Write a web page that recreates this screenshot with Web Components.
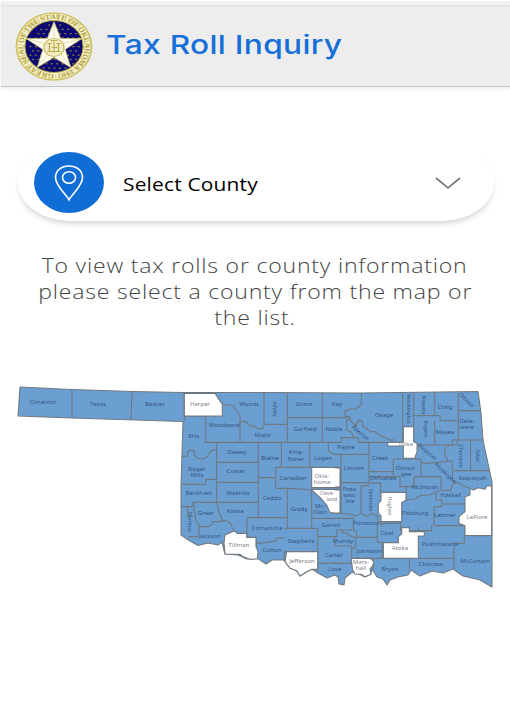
<!DOCTYPE html>
<html lang="en"><head><meta charset="utf-8"><title>Tax Roll Inquiry</title>
<style>body{margin:0;background:#fff;font-family:"Open Sans","Noto Sans",sans-serif;overflow:hidden}</style></head>
<body>
<tax-header>Tax Roll Inquiry</tax-header>
<county-select>Select County</county-select>
<intro-text><span>To view tax rolls or county information</span><span>please select a county from the map or</span><span>the list.</span></intro-text>
<county-map></county-map>
<script>
const define=(name,html,setup)=>customElements.define(name,class extends HTMLElement{
  constructor(){super();const r=this.attachShadow({mode:'open'});r.innerHTML=html;if(setup)setup(r);}
});

define('state-seal',`<style>:host{display:block;width:78px;height:69px}svg{display:block}text{font:bold 7px "Liberation Serif",serif;fill:#b3a542}</style>
<svg width="78" height="69" viewBox="0 0 78 69"><g transform="translate(39 34.5) scale(1.12 1)">
<circle r="33.5" fill="#fbf8e4" stroke="#cfc36b" stroke-width="1.6"/><circle r="30" fill="none" stroke="#e2d992" stroke-width="5" stroke-dasharray="1.5 1.3"/>
<path id="ring" d="M0 27.3A27.3 27.3 0 1 1 .1 27.3" fill="none"/><text textLength="168" lengthAdjust="spacingAndGlyphs"><textPath href="#ring">GREAT SEAL OF THE STATE OF OKLAHOMA 1907</textPath></text>
<circle r="26" fill="#0c0a72" stroke="#b9aa3d" stroke-width="1"/>
<g id="dots" fill="#8c813b"></g>
<path d="M0-25L6-8H25L10 3L15 21L0 11L-15 21L-10 3L-25-8H-6Z" fill="#fffdf0" stroke="#c9bb62" stroke-width=".7"/>
<path d="M0-24V0L24-8M0 0L15 20M0 0L-15 20M0 0L-24-8" stroke="#dbd191" fill="none" stroke-width=".7"/>
<circle r="9" cy="1" fill="#f3edc8" stroke="#cabd62" stroke-width="1.2"/><path d="M-6 5H6M-4 5V-3M0 6V-5M4 5V-3M-6-3H-2M2-3H6M-3-6H3M-2 1H3" stroke="#b9aa4a" stroke-width="1.1"/>
</g></svg>`,r=>{
  let s='';for(let y=-22;y<24;y+=4.3)for(let x=-22+(Math.round(y/4.3)&1)*2.4;x<23;x+=4.8)if(x*x+y*y<560)s+=`<rect x="${x}" y="${y}" width="1.8" height="1.2"/>`;
  r.querySelector('#dots').innerHTML=s;
});

define('tax-header',`<style>:host{display:flex;align-items:center;box-sizing:border-box;height:87px;padding:6px 0 0 14px;margin-left:1px;background:linear-gradient(#fff 0 1px,#eff3f2 1px 5px,#dfdfdf 5px 6px,#ededed 6px);border-bottom:1px solid #c4c4c4;box-shadow:0 2px 4px #0001;gap:13px}
h1{font:500 26.2px/40px "Inter",sans-serif;letter-spacing:.25px;color:#166fd8;margin:-2px 0 0;white-space:nowrap;transform-origin:0 50%;transform:scaleX(1.21)}</style>
<state-seal></state-seal><h1><slot></slot></h1>`);

define('county-select',`<style>:host{display:flex;align-items:center;box-sizing:border-box;margin:57px 16px 0 18px;height:77px;padding:0 32px 0 16px;border-radius:54px/40px;background:#fff;box-shadow:0 4px 6px -2px #0003}
.pin{width:70px;height:61px;border-radius:50%;background:#116dd6;display:grid;place-items:center}
.label{font-size:18.3px;line-height:28px;color:#000;margin-left:19px;margin-top:3px;flex:1;white-space:nowrap;letter-spacing:.15px}
.label span{display:inline-block;transform:scaleX(1.145);transform-origin:0 50%}svg{display:block}</style>
<div class="pin"><svg width="32" height="38" viewBox="0 0 32 38" fill="none" stroke="#fff" stroke-width="1.6"><path d="M16 36C13 30 2.500 22 2.500 13.500C2.500 6.400 8.500 2 16 2S29.500 6.400 29.500 13.500C29.500 22 19 30 16 36Z"/><ellipse cx="16" cy="13.500" rx="6.500" ry="5.800"/></svg></div>
<div class="label"><span><slot></slot></span></div><svg width="28" height="16" viewBox="0 0 28 16"><path d="M2 3L14 13L26 3" fill="none" stroke="#777" stroke-width="1.7"/></svg>`);

define('intro-text',`<style>:host{display:flex;flex-direction:column;align-items:center;margin-top:31px;margin-bottom:50px;color:#444;font-size:21px;font-weight:300;line-height:26px;letter-spacing:.7px;white-space:nowrap}
::slotted(span){display:block;transform:scaleX(1.1)}</style><slot></slot>`);

/* The state is drawn in page units; each half's county lines use a grid three times finer. */
define('county-map',`<style>:host{display:block;height:215px}svg{display:block}text{font:5.2px "Noto Sans",sans-serif;fill:#34557f;text-anchor:middle}text.open{fill:#85808c}</style>
<svg width="510" height="215" viewBox="0 380 510 215"><g id="land" stroke="#6f7982" stroke-width="1.1" stroke-linejoin="round"></g><g id="labels"></g></svg>`,r=>{
  const outline='M20 387L72 389.500L132 391.500L183 392.500H268L360 393L478 391.500L481 413L483 440L489 468L492 482V587L480 580L463 576L453 569L443 573L432 571L420 576L411 570L408 575L398 577L390 580L387 585L383 579L377 577L372 569L371 574L365 577L355 572L351 573L345 578L344 585L339 584L338 577L335 575L327 578L318 573L312 569L307 571.500L300 576L297 571L290 568L284 560L272 560L266 564L257 558L247 559L238 555L225 554L222 542L218 545L208 543L198 545.500L190 541L181 535L181 486L183 421.500L72 418L18 416Z';
  const west='M28 40V122M142 75H160L175 78L182 90L195 105V187M28 108H92V187M197 125H213L225 137L240 139L248 146H262L267 135V40M267 133H337M337 40V187M337 113H495M442 40V187M20 230L38 228V215L45 210L58 212V225L68 235L82 238L98 230L102 220L112 210H125M125 187V367M92 187H460M125 247H250M125 307H250M20 313H92V298H125M250 187V413M250 293H302M302 262V325M302 262H410M302 325H345L410 330M319 187V262M404 187V262M410 325V415M20 380H52V367H125M38 380V408H62V425L72 432V470H40M57 367V390L62 405M72 440H102L112 432V425H142M125 367L130 385L132 400L140 412V422H155L168 432L172 445L178 452M125 367H250V413M216 415V465M216 413H337M337 325V445M328 445H428V515H328V545M245 490L275 487L305 482V475L328 472M243 470V500M410 415H480M428 470H480M428 445V578M410 415V445M428 550H480M460 187V213L475 223H480';
  const east='M79 40V75L62 87H45L30 93V108L45 110V117L35 122V150L50 157L55 173M0 113H38M45 118L52 128L62 135L60 145L70 122H80L85 140L95 145L105 155H120L132 165L150 172L165 180H180M-20 187H20V173H70V187H205M102 187V308M0 223H102M18 223V400M102 275H175M175 237V290M20 308H102M203 40V187M236 40V190M299 40V107M236 107H315V122H370M370 40V180M299 122V197M370 92H438M352 180H445M407 180V272M367 180V195H250L240 185M357 272H465M352 180V195L335 197L327 212L332 228L338 242L352 245V300M175 237H258V248L275 250L352 243M258 250V290M237 290H318V330M237 290V320H195V290H105M102 310L137 308V340M213 320V360M318 330L300 338L282 345L258 346L240 357L213 360L197 370V452H290V437M303 335V360H320V372H390M297 437V380H320V372M297 437H390M388 467V490H357V568M318 330L345 332L355 310L372 308L385 318L405 325M303 360V345M352 300L365 310M78 317V402M78 317H102M0 400L45 402L60 408L80 400L95 410L110 400L128 408V425L140 430V440M55 410V450L65 455V472M0 415H52M52 450H22V458L35 460L52 470L62 472V500L50 507M0 470H5V450H22M0 498H50V550M62 472H127M127 430H193M127 430V487H142V535M48 535H357M-10 550H48M250 440V455M115 535V568M223 535V568M0 470V498';
  const openWest=['M28 40H120L142 73V108H28Z','M410 262H495V323H410Z','M150 465L178 453L187 460H215V472H243V500L249 515L247 537L225 538L205 530L195 523L150 522L147 490Z','M335 515H428V568L410 568L395 575L375 588L365 572L345 565L330 545Z','M410 328H495V400L465 398L455 375L435 352L410 330Z'];
  const openEast=['M205 140H236V185L246 190V215L240 232V235H205V198H158V187H205Z','M138 337H213V360L200 368V425H138V407L130 400V370L138 362Z','M200 443H223V455H268V468H250V535H145V488H190V470L200 462Z','M405 325L415 330L430 323L450 328L455 318H470V467H390V437L372 430V410L390 395V350L405 345Z','M48 535H105L117 545L112 560L105 565L108 583L90 590L78 583L60 582L53 570Z'];
  const half=(x,lines,open)=>`<g transform="translate(${x} 380) scale(.33333)" stroke-width="3.3"><path d="${lines}" fill="none"/>${open.map(d=>`<path d="${d}" fill="#fff"/>`).join('')}</g>`;
  r.querySelector('#land').innerHTML=`<path d="${outline}" fill="#6c9fd1"/><path d="M72 390V418M132 391L131 420" fill="none"/>`+half(175,west,openWest)+half(335,east,openEast)+'<path d="M334 468H340V487H334M334 490H340V513H334" fill="#fff"/><path d="M333 468.500H336V486.500H333ZM333 490.500H336V511.500H333Z" fill="#fff" stroke="none"/>';
  const labels=[['Cimarron',43,404],['Texas',98,406],['Beaver',155,406],['Harper',200,406],['Woods',249,406],['Alfalfa',273,409,90],['Grant',304,406],['Kay',337,406],['Osage',384,417],['Washington',407,409,90],['Nowata',422,405,90],['Craig',445,409],['Ottawa',465,401,48],['Rogers',424,429,90],['Mayes',445,434],['Dela-',467,423],['ware',467,429],['Ellis',194,438],['Woodward',224,427],['Major',263,437],['Garfield',305,431],['Noble',334,431],['Pawnee',359,434,45],['Tulsa',405.500,446],['Creek',380,460],['Wagoner',426,453,45],['Cherokee',459,456,90],['Adair',476,456,90],['Roger',197,471],['Mills',197,477],['Dewey',237,454],['Custer',236,473],['Blaine',270,460],['King-',296,454],['fisher',296,461],['Logan',323,460],['Payne',346,449],['Lincoln',354,470],['Okla-',322,478],['homa',322,484],['Canadian',293,480],['Okmul-',406,470],['gee',406,476],['Okfuskee',383,480],['McIntosh',425,489],['Muskogee',444,474,48],['Sequoyah',473,480],['Beckham',199,495],['Washita',238,495],['Caddo',272,500],['Greer',206,515],['Harmon',188,522,90],['Kiowa',235,513],['Jackson',210,538],['Comanche',267,530],['Grady',299,511],['Cleve-',327,494.500],['land',332,501],['Mc-',320,508],['Clain',320,514],['Potta-',350,491],['wato-',350,497],['mie',350,503],['Seminole',369,500,90],['Hughes',388,506,90],['Pittsburg',415,515],['Haskell',451,497],['Latimer',445,517],['LeFlore',477,519],['Tillman',239,547],['Cotton',272,552],['Stephens',301,543],['Garvin',331,527],['Pontotoc',366,525],['Murray',343,543],['Coal',387,535],['Atoka',400,550],['Pushmataha',440,546],['Johnston',369,553],['Carter',334,557],['Jefferson',302,563],['Love',335,571],['Mars-',361,564],['hall',361,570],['Bryan',390,571],['Choctaw',431,566],['McCurtain',475,563]];
  const open=new Set(['Harper','Okla-','homa','Cleve-','land','Tulsa','Hughes','Atoka','LeFlore','Tillman','Jefferson','Mars-','hall']);
  const narrow=new Set(['Cleve-','land','Potta-','wato-','mie']);
  r.querySelector('#labels').innerHTML=labels.map(([t,x,y,a=0])=>`<text class="${open.has(t)?'open':''}" transform="translate(${x} ${y}) ${a?`scale(1.15 1) rotate(${a})`:`scale(${narrow.has(t)?.98:1.18} 1)`}">${t}</text>`).join('');
});
</script>
</body></html>
